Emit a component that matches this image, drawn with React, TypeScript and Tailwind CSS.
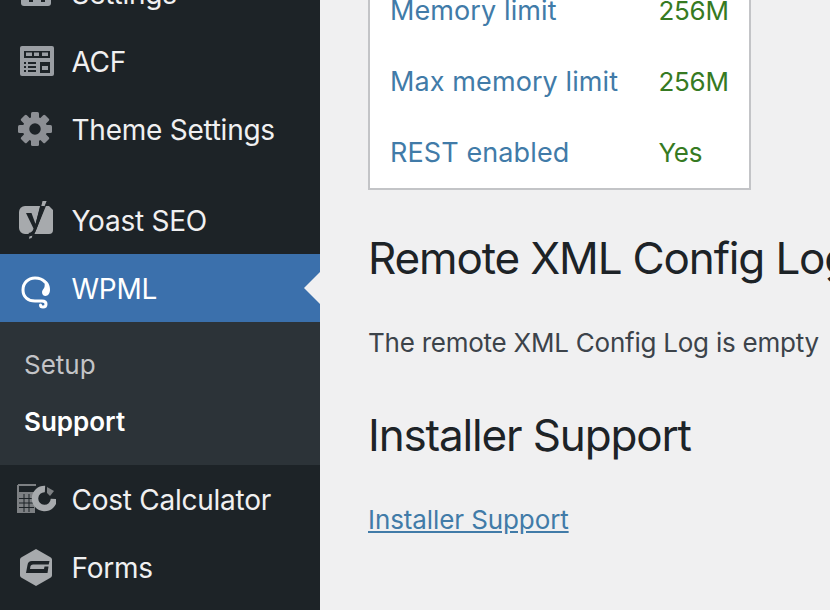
const font = "font-['Inter','Liberation_Sans',sans-serif]";

function Row({ icon, label }: { icon: React.ReactNode; label: string }) {
  return (
    <div className="flex h-[68px] items-center text-[28px] leading-none tracking-[-0.25px] text-[#f0f0f1]">
      <div className="flex w-[72px] shrink-0 items-center justify-center">{icon}</div>
      <span className="-ml-[0.5px] pt-[1px]">{label}</span>
    </div>
  );
}

const SettingsIcon = (
  <svg width="30" height="30" viewBox="0 0 30 30" className="-translate-y-[2px]">
    <path fill="#a0a5aa" d="M0 0h30v27a3 3 0 0 1-3 3H3a3 3 0 0 1-3-3z" />
    <path fill="#1d2327" d="M8 22h4v4H8zM20 22h4v4h-4z" />
  </svg>
);
const AcfIcon = (
  <svg width="34" height="30" viewBox="0 0 34 30" className="translate-x-[1px]">
    <rect width="34" height="30" rx="2" fill="#9a9ea3" />
    <path fill="#1d2327" d="M4 5h26v7H4zM4 16h2v2H4zM8 16h8v2H8zM4 20h2v2H4zM8 20h8v2H8zM4 24h2v2H4zM8 24h8v2H8zM20 16h10v11H20z" />
    <path fill="#9a9ea3" d="M6 6.500h6V10H6zM14 6.500h5V10h-5zM22 6.500h6V10h-6zM22 20h6v4h-6z" />
  </svg>
);
const GearIcon = (
  <svg width="34" height="34" viewBox="0 0 34 34" className="-translate-x-[1px]">
    <g fill="#8c8f94" transform="translate(17 17)">
      {[0, 45, 90, 135, 180, 225, 270, 315].map((a) => (
        <rect key={a} x="-4" y="-17" width="8" height="10" rx="1.5" transform={`rotate(${a})`} />
      ))}
    </g>
    <circle cx="17" cy="17" r="9" fill="none" stroke="#8c8f94" strokeWidth="6.5" />
  </svg>
);
const YoastIcon = (
  <svg width="34" height="40" viewBox="0 0 34 40">
    <path fill="#a7aaad" d="M6 6h18l6 0 4 4v20a4 4 0 0 1-4 4H6a6 6 0 0 1-6-6V12a6 6 0 0 1 6-6z" />
    <path fill="#a7aaad" stroke="#1d2327" strokeWidth="1.2" d="M23 0.500h5.500L13 38.500l-4 1 1-3.500 3.500-1 2.500-6z" />
    <path fill="#1d2327" d="M7 13h5.500l4 11L21.500 6h4.500l-8.500 23c-1.500 4-3.500 6-7 6.500l-1-2.500c3-.5 4.500-2 5-4.500z" />
  </svg>
);
const WpmlIcon = (
  <svg width="36" height="40" viewBox="0 0 36 40" className="translate-x-[2px] translate-y-[4px] blur-[0.5px]">
    <g fill="none" stroke="#fff" strokeLinecap="round">
      <path strokeWidth="3" d="M25 10C22 6.500 18 6 15 6 8 6 3 11 3 18s5 11 12 11h7c3 0 4 1 4 3s-1.500 3-3 3-2.500-1-2.500-2" />
    </g>
    <path fill="#fff" d="M24 8c4 1 6 5 6 10 0 3-2 6-4.500 6-2 0-3.500-1.500-3.500-4 0-2 2-3 2.500-5 .3-2 .5-5-.5-7z" />
  </svg>
);
const CostIcon = (
  <svg width="40" height="30" viewBox="0 0 40 30" className="blur-[0.5px]">
    <path fill="none" stroke="#7d8083" strokeWidth="2" d="M2 1h18M2 1v27h16V9H2" />
    <path fill="#7d8083" d="M3 10h15v18H3z" />
    <path stroke="#1d2327" strokeWidth="1" d="M3 14.500h15M3 19h15M3 23.500h15M8 10v18M13 10v18" />
    <path fill="none" stroke="#a7aaad" strokeWidth="6.500" d="M38 15A9.500 9.500 0 1 1 29 5" />
    <path fill="#7d8083" d="M31 3l7 4-4 5-3-3z" />
  </svg>
);
const GravityIcon = (
  <svg width="32" height="37" viewBox="0 0 32 37">
    <path fill="#a7aaad" d="M16 0l14 8a3 3 0 0 1 2 3v15a3 3 0 0 1-2 3l-14 8-14-8a3 3 0 0 1-2-3V11a3 3 0 0 1 2-3z" />
    <path fill="#1d2327" d="M12 12H29.500l-.8 3.500H13q-2 0-2.500 1.500l-.5 3h14l.5-2.500h4l-1 6.500H6l1.500-8q.5-4 4.500-4z" />
  </svg>
);

export default function App() {
  return (
    <div className={`flex h-[610px] w-[830px] overflow-hidden bg-[#f0f0f1] ${font}`}>
      <aside className="h-[610px] w-[320px] shrink-0 overflow-hidden bg-[#1d2327]">
        <div className="-mt-[41px]">
          <Row icon={SettingsIcon} label="Settings" />
          <Row icon={AcfIcon} label="ACF" />
          <Row icon={GearIcon} label="Theme Settings" />
          <div className="h-[23px]" />
          <Row icon={YoastIcon} label="Yoast SEO" />
          <div className="relative flex h-[68px] items-center bg-[#3b70ac] text-[28px] leading-none tracking-[-0.25px] text-white">
            <div className="flex w-[72px] shrink-0 items-center justify-center">{WpmlIcon}</div>
            <span className="-ml-[0.5px] pt-[1px]">WPML</span>
            <div className="absolute right-0 top-[18px] h-0 w-0 border-y-[16px] border-r-[16px] border-y-transparent border-r-[#f0f0f1]" />
          </div>
          <div className="flex h-[143px] flex-col bg-[#2c3338] pl-6 pt-[14px] text-[26px] leading-none">
            <div className="flex h-[58px] items-center text-[#c3c4c7]">Setup</div>
            <div className="flex h-[56px] items-center font-semibold text-white">Support</div>
          </div>
          <Row icon={CostIcon} label="Cost Calculator" />
          <Row icon={GravityIcon} label="Forms" />
        </div>
      </aside>
      <main className="min-w-0 flex-1 pl-[48px]">
        <div className="-mt-[27px] w-[383px] border-2 border-[#c3c4c7] bg-white pl-5 pr-5 leading-none">
          {[
            ["Memory limit", "256M"],
            ["Max memory limit", "256M"],
            ["REST enabled", "Yes"],
          ].map(([k, v]) => (
            <div key={k} className="flex h-[71px] items-center">
              <span className="w-[268.500px] shrink-0 text-[27px] tracking-[0.1px] text-[#417ba8]">{k}</span>
              <span className="text-[26px] tracking-[-0.3px] text-[#367a22]">{v}</span>
            </div>
          ))}
        </div>
        <h1 className="mt-[40px] whitespace-nowrap text-[44px] font-normal leading-[56px] tracking-[-1.150px] text-[#1d2327]">Remote XML Config Log</h1>
        <p className="mt-[39px] whitespace-nowrap text-[26px] leading-[36px] tracking-[-0.24px] text-[#3c434a]">The remote XML Config Log is empty</p>
        <h2 className="mt-[46px] whitespace-nowrap text-[44px] font-normal leading-[56px] tracking-[-1.150px] text-[#1d2327]">Installer Support</h2>
        <a className="mt-[39px] block whitespace-nowrap text-[26px] leading-[36px] tracking-[-0.1px] text-[#417ba8] underline">Installer Support</a>
      </main>
    </div>
  );
}
